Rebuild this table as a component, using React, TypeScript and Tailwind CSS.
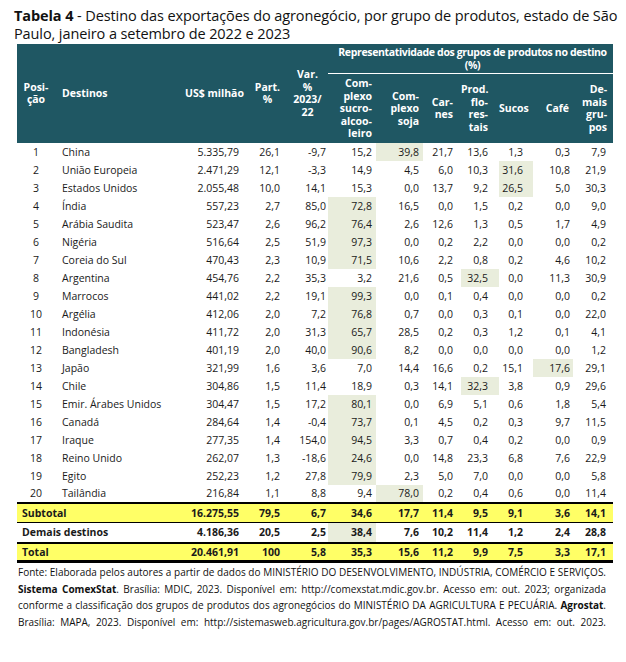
const rows: [string, string, string, string, string, string[]][] = [
  ["1", "China", "5.335,79", "26,1", "-9,7", ["15,2", "39,8", "21,7", "13,6", "1,3", "0,3", "7,9"]],
  ["2", "União Europeia", "2.471,29", "12,1", "-3,3", ["14,9", "4,5", "6,0", "10,3", "31,6", "10,8", "21,9"]],
  ["3", "Estados Unidos", "2.055,48", "10,0", "14,1", ["15,3", "0,0", "13,7", "9,2", "26,5", "5,0", "30,3"]],
  ["4", "Índia", "557,23", "2,7", "85,0", ["72,8", "16,5", "0,0", "1,5", "0,2", "0,0", "9,0"]],
  ["5", "Arábia Saudita", "523,47", "2,6", "96,2", ["76,4", "2,6", "12,6", "1,3", "0,5", "1,7", "4,9"]],
  ["6", "Nigéria", "516,64", "2,5", "51,9", ["97,3", "0,0", "0,2", "2,2", "0,0", "0,0", "0,2"]],
  ["7", "Coreia do Sul", "470,43", "2,3", "10,9", ["71,5", "10,6", "2,2", "0,8", "0,2", "4,6", "10,2"]],
  ["8", "Argentina", "454,76", "2,2", "35,3", ["3,2", "21,6", "0,5", "32,5", "0,0", "11,3", "30,9"]],
  ["9", "Marrocos", "441,02", "2,2", "19,1", ["99,3", "0,0", "0,1", "0,4", "0,0", "0,0", "0,2"]],
  ["10", "Argélia", "412,06", "2,0", "7,2", ["76,8", "0,7", "0,0", "0,3", "0,1", "0,0", "22,0"]],
  ["11", "Indonésia", "411,72", "2,0", "31,3", ["65,7", "28,5", "0,2", "0,3", "1,2", "0,1", "4,1"]],
  ["12", "Bangladesh", "401,19", "2,0", "40,0", ["90,6", "8,2", "0,0", "0,0", "0,0", "0,0", "1,2"]],
  ["13", "Japão", "321,99", "1,6", "3,6", ["7,0", "14,4", "16,6", "0,2", "15,1", "17,6", "29,1"]],
  ["14", "Chile", "304,86", "1,5", "11,4", ["18,9", "0,3", "14,1", "32,3", "3,8", "0,9", "29,6"]],
  ["15", "Emir. Árabes Unidos", "304,47", "1,5", "17,2", ["80,1", "0,0", "6,9", "5,1", "0,6", "1,8", "5,4"]],
  ["16", "Canadá", "284,64", "1,4", "-0,4", ["73,7", "0,1", "4,5", "0,2", "0,3", "9,7", "11,5"]],
  ["17", "Iraque", "277,35", "1,4", "154,0", ["94,5", "3,3", "0,7", "0,4", "0,2", "0,0", "0,9"]],
  ["18", "Reino Unido", "262,07", "1,3", "-18,6", ["24,6", "0,0", "14,8", "23,3", "6,8", "7,6", "22,9"]],
  ["19", "Egito", "252,23", "1,2", "27,8", ["79,9", "2,3", "5,0", "7,0", "0,0", "0,0", "5,8"]],
  ["20", "Tailândia", "216,84", "1,1", "8,8", ["9,4", "78,0", "0,2", "0,4", "0,6", "0,0", "11,4"]],
];

const totals = [
  { label: "Subtotal", usd: "16.275,55", part: "79,5", varp: "6,7", g: ["34,6", "17,7", "11,4", "9,5", "9,1", "3,6", "14,1"], yellow: true, hl: false, top: "border-t-2" },
  { label: "Demais destinos", usd: "4.186,36", part: "20,5", varp: "2,5", g: ["38,4", "7,6", "10,2", "11,4", "1,2", "2,4", "28,8"], yellow: false, hl: true, top: "border-t" },
  { label: "Total", usd: "20.461,91", part: "100", varp: "5,8", g: ["35,3", "15,6", "11,2", "9,9", "7,5", "3,3", "17,1"], yellow: true, hl: false, top: "border-t-2" },
];

// right padding per product column, so numbers line up like the original
const gPad = ["pr-[4px]", "pr-[4px]", "pr-[8px]", "pr-[11px]", "pr-[10px]", "pr-[3px]", "pr-[7px]"];

// biggest share among the product groups (Demais grupos left out)
function maxIndex(g: string[]) {
  let best = 0;
  for (let i = 1; i < 6; i++) {
    if (parseFloat(g[i].replace(",", ".")) > parseFloat(g[best].replace(",", "."))) best = i;
  }
  return best;
}

const hl = "bg-[#e9eddc]";

export default function App() {
  return (
    <div className="w-[626px] h-[662px] bg-white text-[#1a1a1a] font-['Open_Sans','DejaVu_Sans',sans-serif]">
      <h1 className="pl-[14px] pt-[7px] text-[14.5px] leading-[17.5px] text-[#111] tracking-[-0.1px]">
        <b>Tabela 4</b> - Destino das exportações do agronegócio, por grupo de produtos, estado de São Paulo, janeiro a setembro de 2022 e 2023
      </h1>

      <table className="ml-[17px] mt-[2px] w-[596px] table-fixed border-collapse text-[10.5px]">
        <colgroup>
          <col className="w-[38px]" />
          <col className="w-[130px]" />
          <col className="w-[60px]" />
          <col className="w-[42px]" />
          <col className="w-[41px]" />
          <col className="w-[48px]" />
          <col className="w-[47px]" />
          <col className="w-[38px]" />
          <col className="w-[38px]" />
          <col className="w-[34px]" />
          <col className="w-[40px]" />
          <col className="w-[40px]" />
        </colgroup>
        <thead className="bg-[#1f5763] text-white font-bold leading-[12.5px]">
          <tr className="h-[29px]">
            <th rowSpan={2} className="text-center align-middle">Posi-<br />ção</th>
            <th rowSpan={2} className="text-left pl-[7px] align-middle">Destinos</th>
            <th rowSpan={2} className="text-right pr-[6px] align-middle whitespace-nowrap">US$ milhão</th>
            <th rowSpan={2} className="text-center pl-[3px] align-middle">Part.<br />%</th>
            <th rowSpan={2} className="text-center align-middle">Var.<br />%<br />2023/<br />22</th>
            <th colSpan={7} className="border-b border-white text-center align-middle pt-[2px] pb-[2px] pl-[4px] whitespace-nowrap tracking-[-0.35px]">
              Representatividade dos grupos de produtos no destino<br />(%)
            </th>
          </tr>
          <tr className="h-[69px]">
            <th className="text-right pr-[4px] align-middle">Com-<br />plexo<br />sucro-<br />alcoo-<br />leiro</th>
            <th className="text-right pr-[4px] align-middle">Com-<br />plexo<br />soja</th>
            <th className="text-right pr-[8px] align-middle">Car-<br />nes</th>
            <th className="text-right pr-[11px] align-middle">Prod.<br />flo-<br />res-<br />tais</th>
            <th className="text-right pr-[8px] align-middle">Sucos</th>
            <th className="text-right pr-[4px] align-middle">Café</th>
            <th className="text-right pr-[6px] align-middle">De-<br />mais<br />gru-<br />pos</th>
          </tr>
        </thead>
        <tbody className="leading-[14px]">
          {rows.map(([pos, dest, usd, part, varp, g]) => {
            const m = maxIndex(g);
            return (
              <tr key={pos} className="h-[18px]">
                <td className="text-center">{pos}</td>
                <td className="pl-[7px] whitespace-nowrap">{dest}</td>
                <td className="text-right pr-[6px]">{usd}</td>
                <td className="text-right pr-[7px]">{part}</td>
                <td className="text-right pr-[2px]">{varp}</td>
                {g.map((v, i) => (
                  <td key={i} className={`text-right ${gPad[i]} ${i === m ? hl : ""}`}>{v}</td>
                ))}
              </tr>
            );
          })}
          {totals.map((t, ti) => (
            <tr
              key={t.label}
              className={`font-bold border-black ${t.top} ${t.yellow ? "bg-[#ffff66]" : ""} ${ti === 2 ? "h-[19px] border-b-[3px]" : "h-[20px]"}`}
            >
              <td colSpan={2} className="pl-[5px]">{t.label}</td>
              <td className="text-right pr-[6px]">{t.usd}</td>
              <td className="text-right pr-[7px]">{t.part}</td>
              <td className="text-right pr-[2px]">{t.varp}</td>
              {t.g.map((v, i) => (
                <td key={i} className={`text-right ${gPad[i]} ${t.hl && i === 0 ? hl : ""}`}>{v}</td>
              ))}
            </tr>
          ))}
        </tbody>
      </table>

      <div className="pl-[18px] w-[606px] pt-[1px] text-[10px] leading-[16.5px] text-[#111] text-justify [text-align-last:justify] whitespace-nowrap">
        <div>Fonte: Elaborada pelos autores a partir de dados do MINISTÉRIO DO DESENVOLVIMENTO, INDÚSTRIA, COMÉRCIO E SERVIÇOS.</div>
        <div><b>Sistema ComexStat</b>. Brasília: MDIC, 2023. Disponível em: http://comexstat.mdic.gov.br. Acesso em: out. 2023; organizada</div>
        <div>conforme a classificação dos grupos de produtos dos agronegócios do MINISTÉRIO DA AGRICULTURA E PECUÁRIA. <b>Agrostat</b>.</div>
        <div>Brasília: MAPA, 2023. Disponível em: http://sistemasweb.agricultura.gov.br/pages/AGROSTAT.html. Acesso em: out. 2023.</div>
      </div>
    </div>
  );
}
